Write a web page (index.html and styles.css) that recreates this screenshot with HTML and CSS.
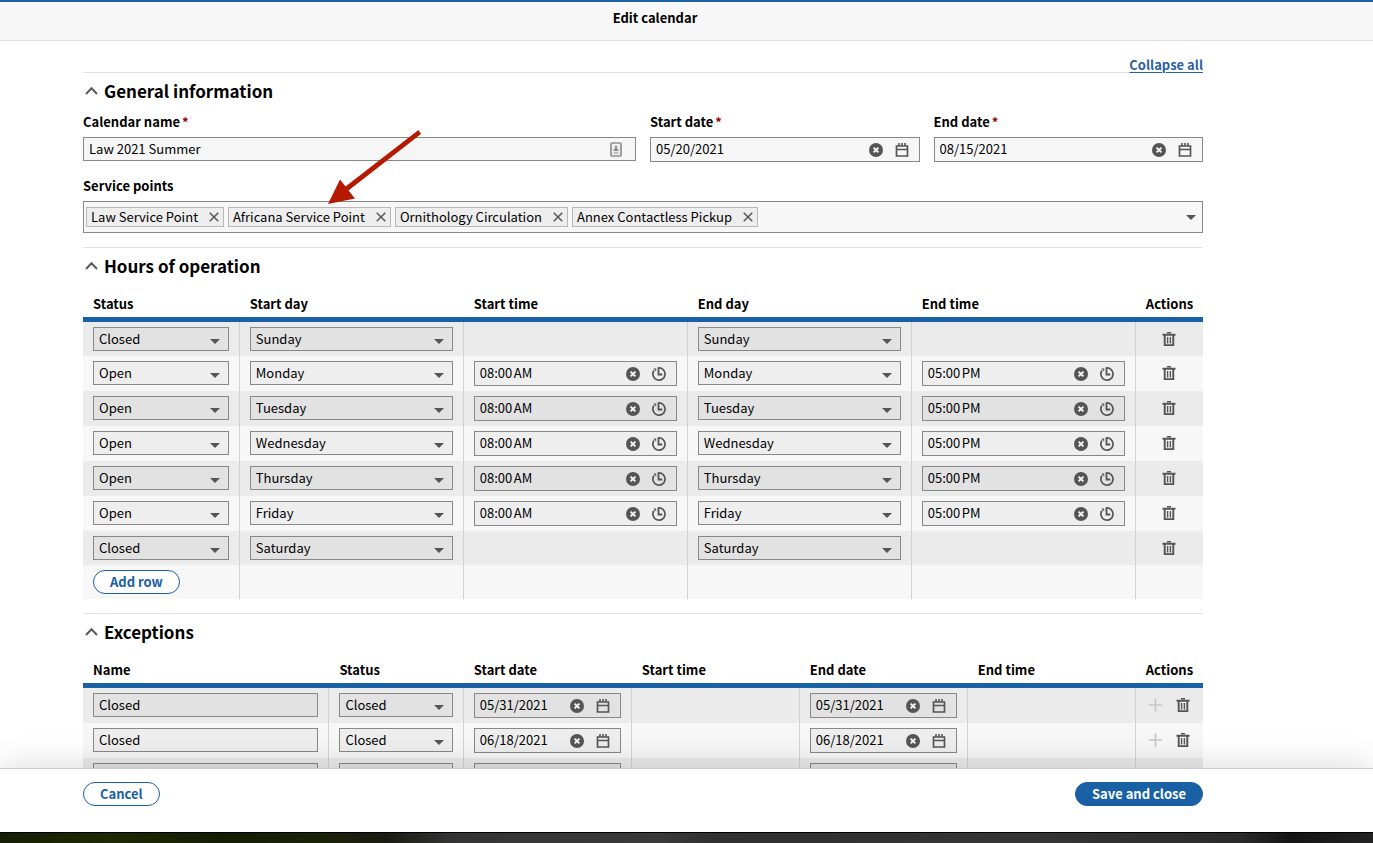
FILE: index.html
```html
<!DOCTYPE html>
<html lang="en">
<head>
    <meta charset="UTF-8">
    <meta name="viewport" content="width=device-width, initial-scale=1.0">
    <title>Edit calendar</title>
    <link rel="stylesheet" href="styles.css">
</head>
<body>
    <svg class="sprite" aria-hidden="true">
        <symbol id="icon-caret-up" viewBox="0 0 14 14">
            <path d="M1 10 6.500 4.200 12 10" fill="none" stroke="currentColor" stroke-width="2"/>
        </symbol>
        <symbol id="icon-clear" viewBox="0 0 14 14">
            <circle cx="7" cy="7" r="7" fill="currentColor"/>
            <path d="M4.600 4.600 9.400 9.400M9.400 4.600 4.600 9.400" stroke="#f4f4f4" stroke-width="2"/>
        </symbol>
        <symbol id="icon-calendar" viewBox="0 0 14 14">
            <path d="M1.500 3h11v10h-11zM1 6.500h12" fill="none" stroke="currentColor" stroke-width="1.700"/>
            <path d="M4 0v3M7 0v3M10 0v3" stroke="currentColor" stroke-width="1.600"/>
        </symbol>
        <symbol id="icon-clock" viewBox="0 0 14 14">
            <path d="M6 1a6.100 6.100 0 1 1-4 2.500" fill="none" stroke="currentColor" stroke-width="1.700"/>
            <path d="M6.500.5v7h3.800" fill="none" stroke="currentColor" stroke-width="1.800"/>
            <path d="M1.300 1.500h2.900v2.900z" fill="currentColor"/>
        </symbol>
        <symbol id="icon-trash" viewBox="0 0 14 14">
            <path d="M.5 2.800h13M2.700 3v10.100h8.600V3" fill="none" stroke="currentColor" stroke-width="1.900"/>
            <path d="M5 .7h4M5.600 5v6.500M8.400 5v6.500" fill="none" stroke="currentColor" stroke-width="1.400"/>
        </symbol>
        <symbol id="icon-plus" viewBox="0 0 14 14">
            <path d="M7.500.5v13M1 7h13" stroke="currentColor" stroke-width="1.700"/>
        </symbol>
        <symbol id="icon-times" viewBox="0 0 14 14">
            <path d="M2 2l10 10M12 2L2 12" stroke="currentColor" stroke-width="1.700"/>
        </symbol>
        <symbol id="icon-contact" viewBox="0 0 12 15">
            <rect x="1" y="1" width="10" height="13" rx="1" fill="#f1f1f1" stroke="currentColor" stroke-width="1.700"/>
            <circle cx="6" cy="4.800" r="1.300" fill="currentColor"/>
            <path d="M3.500 9V7.500L5 6h2l1.500 1.500V9zM3.500 10.500h5v1h-5z" fill="currentColor"/>
        </symbol>
    </svg>

    <header class="pane-header">
        <h1 class="pane-title">Edit calendar</h1>
    </header>

    <main class="pane-content">
        <div class="toolbar">
            <a class="collapse-all" href="#">Collapse all</a>
        </div>

        <section class="accordion">
            <h2 class="accordion-title">
                <button type="button" class="accordion-toggle" aria-expanded="true">
                    <svg class="icon"><use href="#icon-caret-up"/></svg>
                    General information
                </button>
            </h2>
            <div class="form-grid">
                <div class="col-6">
                    <label class="label" for="calendar-name">Calendar name<span class="required">*</span></label>
                    <div class="field field-text">
                        <input id="calendar-name" type="text" value="Law 2021 Summer">
                        <svg class="contact-icon"><use href="#icon-contact"/></svg>
                    </div>
                </div>
                <div class="col-3">
                    <label class="label" for="start-date">Start date<span class="required">*</span></label>
                    <div class="field">
                        <input id="start-date" type="text" value="05/20/2021">
                        <button type="button" class="icon-button" aria-label="Clear"><svg class="icon"><use href="#icon-clear"/></svg></button>
                        <button type="button" class="icon-button" aria-label="Show calendar"><svg class="icon"><use href="#icon-calendar"/></svg></button>
                    </div>
                </div>
                <div class="col-3">
                    <label class="label" for="end-date">End date<span class="required">*</span></label>
                    <div class="field">
                        <input id="end-date" type="text" value="08/15/2021">
                        <button type="button" class="icon-button" aria-label="Clear"><svg class="icon"><use href="#icon-clear"/></svg></button>
                        <button type="button" class="icon-button" aria-label="Show calendar"><svg class="icon"><use href="#icon-calendar"/></svg></button>
                    </div>
                </div>
                <div class="col-12">
                    <label class="label" for="service-points">Service points</label>
                    <div class="multi-select">
                        <ul class="tags">
                            <li class="tag">Law Service Point<button type="button" class="tag-remove" aria-label="Remove Law Service Point"><svg><use href="#icon-times"/></svg></button></li>
                            <li class="tag">Africana Service Point<button type="button" class="tag-remove" aria-label="Remove Africana Service Point"><svg><use href="#icon-times"/></svg></button></li>
                            <li class="tag">Ornithology Circulation<button type="button" class="tag-remove" aria-label="Remove Ornithology Circulation"><svg><use href="#icon-times"/></svg></button></li>
                            <li class="tag">Annex Contactless Pickup<button type="button" class="tag-remove" aria-label="Remove Annex Contactless Pickup"><svg><use href="#icon-times"/></svg></button></li>
                        </ul>
                        <input id="service-points" class="multi-select-input" type="text">
                        <button type="button" class="multi-select-toggle" aria-label="Show service points"></button>
                    </div>
                </div>
            </div>
        </section>

        <section class="accordion">
            <h2 class="accordion-title">
                <button type="button" class="accordion-toggle" aria-expanded="true">
                    <svg class="icon"><use href="#icon-caret-up"/></svg>
                    Hours of operation
                </button>
            </h2>
            <table class="list hours">
                <thead>
                    <tr>
                        <th class="w-14">Status</th>
                        <th class="w-20">Start day</th>
                        <th class="w-20">Start time</th>
                        <th class="w-20">End day</th>
                        <th class="w-20">End time</th>
                        <th class="w-6">Actions</th>
                    </tr>
                </thead>
                <tbody id="hours-rows"></tbody>
                <tfoot>
                    <tr>
                        <td><button type="button" class="button">Add row</button></td>
                        <td></td>
                        <td></td>
                        <td></td>
                        <td></td>
                        <td></td>
                    </tr>
                </tfoot>
            </table>
        </section>

        <section class="accordion">
            <h2 class="accordion-title">
                <button type="button" class="accordion-toggle" aria-expanded="true">
                    <svg class="icon"><use href="#icon-caret-up"/></svg>
                    Exceptions
                </button>
            </h2>
            <table class="list exceptions">
                <thead>
                    <tr>
                        <th class="w-22">Name</th>
                        <th class="w-12">Status</th>
                        <th class="w-15">Start date</th>
                        <th class="w-15">Start time</th>
                        <th class="w-15">End date</th>
                        <th class="w-15">End time</th>
                        <th class="w-6">Actions</th>
                    </tr>
                </thead>
                <tbody id="exception-rows"></tbody>
            </table>
        </section>

        <svg class="pointer" viewBox="0 0 94 76" aria-hidden="true">
            <path d="M90.500 1 93 5 20.500 61.500 27 69.500 0 75 12 50.500 17.500 57.500z" fill="#b51a00"/>
        </svg>
    </main>

    <footer class="pane-footer">
        <button type="button" class="button">Cancel</button>
        <button type="submit" class="button button-primary">Save and close</button>
    </footer>
    <div class="backdrop"></div>

    <script>
        const days = ['Sunday', 'Monday', 'Tuesday', 'Wednesday', 'Thursday', 'Friday', 'Saturday'];
        const exceptions = [
            { name: 'Closed', date: '05/31/2021' },
            { name: 'Closed', date: '06/18/2021' },
            { name: 'Closed', date: '07/05/2021' }
        ];

        function select(label, options, value) {
            const items = options.map(o => `<option${o === value ? ' selected' : ''}>${o}</option>`).join('');
            return `<select class="select" aria-label="${label}">${items}</select>`;
        }

        function iconButton(icon, label, extra = '') {
            return `<button type="button" class="icon-button ${extra}" aria-label="${label}"><svg class="icon"><use href="#icon-${icon}"/></svg></button>`;
        }

        function picker(label, value, icon) {
            return `<div class="field"><input type="text" aria-label="${label}" value="${value}">${iconButton('clear', 'Clear')}${iconButton(icon, 'Open picker')}</div>`;
        }

        document.getElementById('hours-rows').innerHTML = days.map((day, i) => {
            const open = i > 0 && i < 6;
            return `<tr>
                <td>${select('Status', ['Open', 'Closed'], open ? 'Open' : 'Closed')}</td>
                <td>${select('Start day', days, day)}</td>
                <td>${open ? picker('Start time', '08:00\u202fAM', 'clock') : ''}</td>
                <td>${select('End day', days, day)}</td>
                <td>${open ? picker('End time', '05:00\u202fPM', 'clock') : ''}</td>
                <td class="actions">${iconButton('trash', 'Delete row', 'action')}</td>
            </tr>`;
        }).join('');

        document.getElementById('exception-rows').innerHTML = exceptions.map(item => `<tr>
                <td><div class="field field-text"><input type="text" aria-label="Name" value="${item.name}"></div></td>
                <td>${select('Status', ['Open', 'Closed'], 'Closed')}</td>
                <td>${picker('Start date', item.date, 'calendar')}</td>
                <td></td>
                <td>${picker('End date', item.date, 'calendar')}</td>
                <td></td>
                <td class="actions">${iconButton('plus', 'Add time', 'action muted')}${iconButton('trash', 'Delete row', 'action')}</td>
            </tr>`).join('');
    </script>
</body>
</html>
```
FILE: styles.css
```css
* {
    box-sizing: border-box;
}

body {
    margin: 0;
    height: 100vh;
    display: flex;
    flex-direction: column;
    overflow: hidden;
    background: #fff;
    color: #000;
    font-family: "Noto Sans CJK SC", sans-serif;
    font-size: 13px;
    line-height: 18px;
}

button,
input,
select {
    font: inherit;
    color: inherit;
}

button {
    padding: 0;
    border: 0;
    background: none;
    cursor: pointer;
}

.sprite {
    display: none;
}

.icon {
    display: block;
    width: 14px;
    height: 14px;
}

/* header */
.pane-header {
    flex: none;
    padding: 7px 63px 13px 0;
    border-top: 2px solid #1960a4;
    border-bottom: 1px solid #dcdcdc;
    background: #f7f7f7;
    text-align: center;
}

.pane-title {
    margin: 0;
    font-size: 13px;
    line-height: 18px;
}

/* content */
.pane-content {
    position: relative;
    flex: 1;
    min-height: 0;
    overflow: hidden;
    padding: 15px 170px 0 83px;
}

.toolbar {
    display: flex;
    justify-content: flex-end;
    height: 16px;
}

.collapse-all {
    color: #2b5fa5;
    font-weight: bold;
    text-underline-offset: 2px;
}

.accordion {
    border-top: 1px solid #e2e2e2;
    margin-bottom: 14px;
}

.accordion-title {
    margin: 0;
    padding: 6px 0 9px;
    font-size: 17px;
    line-height: 24px;
}

.accordion-toggle {
    display: flex;
    align-items: center;
    gap: 5px;
    padding-left: 2px;
    font-weight: bold;
}

.accordion-toggle .icon {
    color: #5a5a5a;
}

.form-grid {
    display: grid;
    grid-template-columns: repeat(12, 1fr);
    gap: 14px;
}

.col-3 {
    grid-column: span 3;
}

.col-6 {
    grid-column: span 6;
}

.col-12 {
    grid-column: span 12;
}

.label {
    display: block;
    margin-bottom: 5px;
    line-height: 20px;
    font-weight: bold;
}

.required {
    margin-left: 2px;
    color: #900;
}

/* fields */
.field {
    display: flex;
    align-items: flex-start;
    height: 25px;
    padding: 0 4px 0 5px;
    border: 1px solid #888;
    background: rgba(0, 0, 0, .035);
}

.field-text {
    height: 24px;
}

.field input {
    flex: 1;
    min-width: 0;
    height: 21px;
    padding: 0;
    border: 0;
    background: none;
    outline: none;
}

.contact-icon {
    width: 12px;
    height: 15px;
    margin: 4px 13px 0 0;
    margin-right: 9px;
    color: #909090;
}

.icon-button {
    display: flex;
    align-items: center;
    justify-content: center;
    flex: none;
    width: 26px;
    height: 24px;
    color: #555;
}

.select {
    display: block;
    width: 100%;
    height: 24px;
    padding: 0 24px 0 5px;
    border: 1px solid #888;
    border-radius: 0;
    appearance: none;
    background: rgba(0, 0, 0, .035) url("data:image/svg+xml,%3Csvg xmlns='http://www.w3.org/2000/svg' width='10' height='5'%3E%3Cpath d='M0 0h10L5 5z' fill='%23555'/%3E%3C/svg%3E") no-repeat right 8px top 11px;
}

.multi-select {
    display: flex;
    align-items: center;
    height: 32px;
    padding: 0 2px;
    border: 1px solid #888;
    background: #f7f7f7;
}

.tags {
    display: flex;
    gap: 4px;
    margin: 0;
    padding: 0;
    list-style: none;
}

.tag {
    display: flex;
    align-items: center;
    height: 20px;
    padding-left: 4px;
    border: 1px solid #b8b8b8;
    background: #eee;
}

.tag-remove {
    display: flex;
    justify-content: flex-end;
    width: 25px;
    padding-right: 3px;
    color: #555;
}

.tag-remove svg {
    width: 12px;
    height: 12px;
}

.multi-select-input {
    flex: 1;
    min-width: 0;
    border: 0;
    background: none;
    outline: none;
}

.multi-select-toggle {
    width: 18px;
    height: 18px;
    background: url("data:image/svg+xml,%3Csvg xmlns='http://www.w3.org/2000/svg' width='10' height='5'%3E%3Cpath d='M0 0h10L5 5z' fill='%23555'/%3E%3C/svg%3E") no-repeat center;
}

/* tables */
.list {
    width: 100%;
    table-layout: fixed;
    border-collapse: separate;
    border-spacing: 0;
}

.list th {
    padding: 5px 0 1px 10px;
    border-bottom: 5px solid #1960a4;
    text-align: left;
    line-height: 24px;
    white-space: nowrap;
}

.list td {
    height: 34px;
    padding: 5px 10px;
    border-right: 1px solid #d2d2d2;
    vertical-align: top;
}

.list td:last-child {
    border-right: 0;
}

.list tbody tr:nth-child(odd) {
    background: #ebebeb;
}

.list tbody tr:nth-child(even),
.list tfoot tr {
    background: #f7f7f7;
}

.list .actions {
    padding: 5px 0;
    text-align: center;
    white-space: nowrap;
}

.action {
    display: inline-flex;
    width: 28px;
    vertical-align: top;
}

.muted {
    color: #c6c6c6;
}

.w-6 {
    width: 6%;
}

.w-12 {
    width: 12%;
}

.w-14 {
    width: 14%;
}

.w-15 {
    width: 15%;
}

.w-20 {
    width: 20%;
}

.w-22 {
    width: 22%;
}

/* buttons */
.button {
    height: 24px;
    padding: 0 16px;
    border: 1px solid #1960a4;
    border-radius: 12px;
    background: #fff;
    color: #1960a4;
    font-weight: bold;
}

.button-primary {
    background: #1960a4;
    color: #fff;
}

/* footer */
.pane-footer {
    position: relative;
    flex: none;
    display: flex;
    justify-content: space-between;
    padding: 13px 170px 26px 83px;
    border-top: 1px solid #ccc;
    background: #fff;
    box-shadow: 0 0 36px rgba(0, 0, 0, .16);
}

.backdrop {
    position: relative;
    flex: none;
    height: 11px;
    border-top: 1px solid #000;
    background: linear-gradient(90deg, #171d03, #1f2903 8%, #161c04 16%, #1c2206 23%, #1a1c12 28%, #343434 33%, #3a3a3a 48%, #303030 52%, #353535 75%, #2b2b2b 90%, #151515 94%, #222 100%);
}

/* annotation arrow over the form */
.pointer {
    position: absolute;
    left: 328px;
    top: 88px;
    width: 94px;
    height: 76px;
    pointer-events: none;
}
```
